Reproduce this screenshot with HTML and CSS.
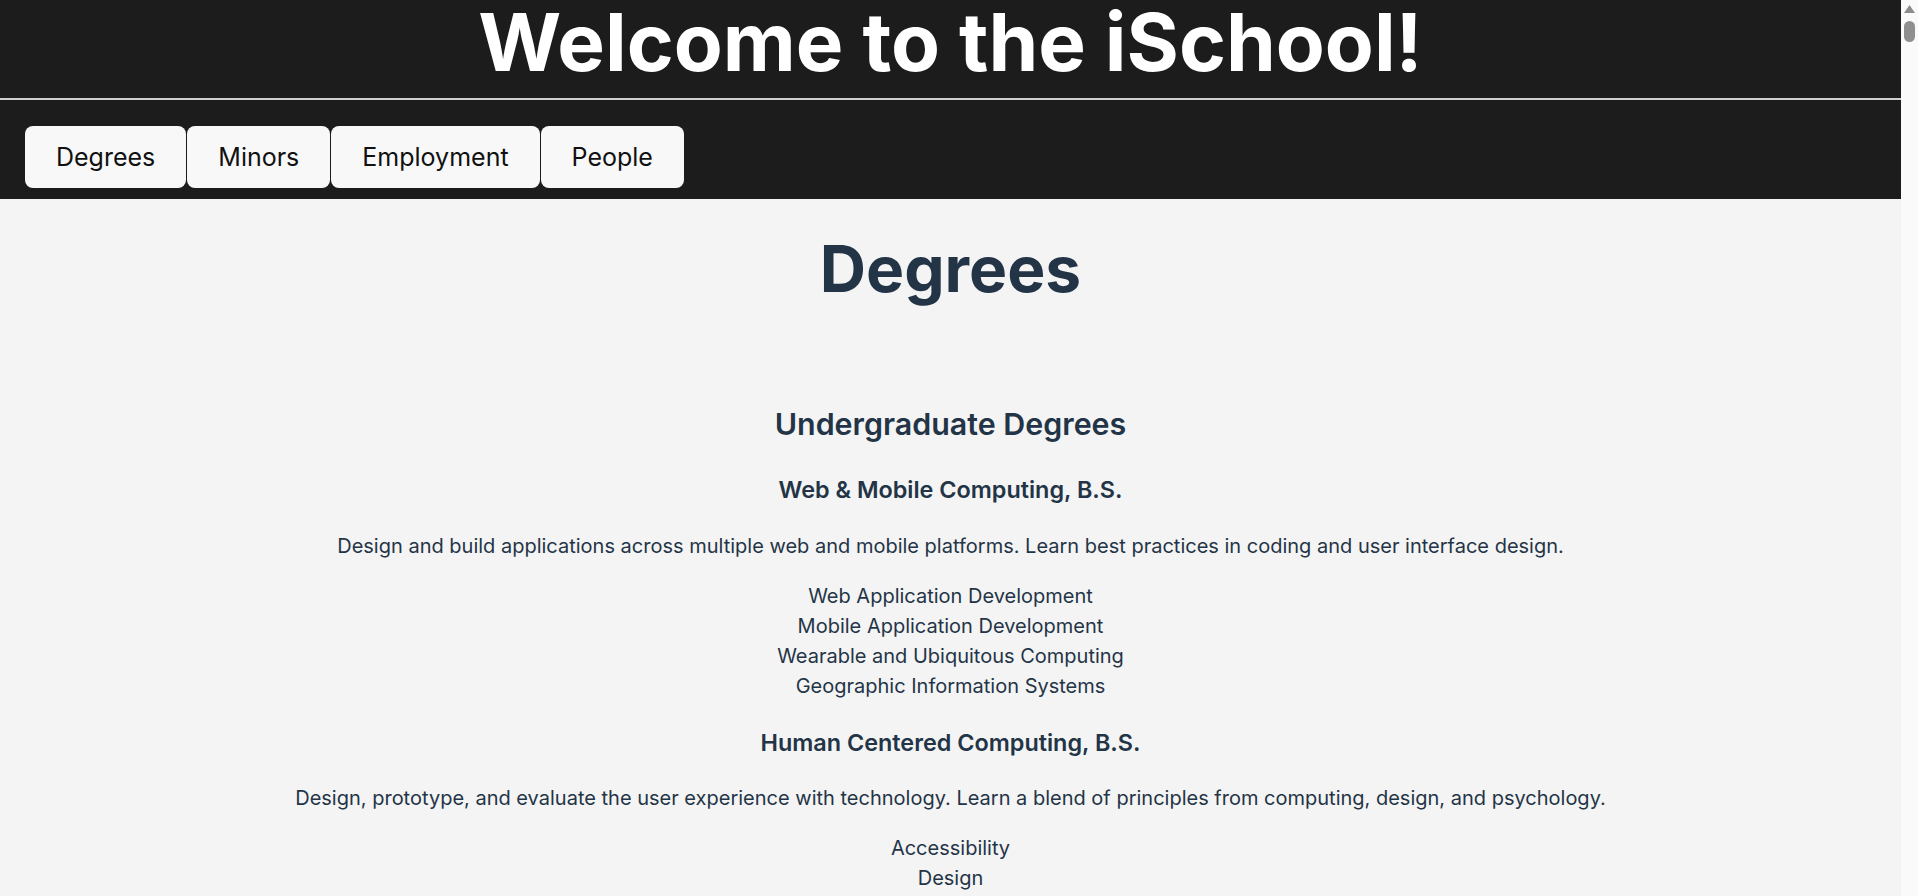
FILE: index.html
```html
<!DOCTYPE html>
<html lang="en">
<head>
<meta charset="utf-8">
<title>Welcome to the iSchool!</title>
<link rel="stylesheet" href="styles.css">
</head>
<body>
<header class="site-header">
  <h1 class="site-title">Welcome to the iSchool!</h1>
</header>
<nav class="tabs">
  <button class="tab">Degrees</button>
  <button class="tab">Minors</button>
  <button class="tab">Employment</button>
  <button class="tab">People</button>
</nav>
<main class="content">
  <section class="section">
    <h2 class="section-title">Degrees</h2>
    <div class="group">
      <h3 class="group-title">Undergraduate Degrees</h3>
      <article class="degree">
        <h4 class="degree-title">Web &amp; Mobile Computing, B.S.</h4>
        <p class="degree-desc">Design and build applications across multiple web and mobile platforms. Learn best practices in coding and user interface design.</p>
        <ul class="conc">
          <li>Web Application Development</li>
          <li>Mobile Application Development</li>
          <li>Wearable and Ubiquitous Computing</li>
          <li>Geographic Information Systems</li>
        </ul>
      </article>
      <article class="degree">
        <h4 class="degree-title">Human Centered Computing, B.S.</h4>
        <p class="degree-desc">Design, prototype, and evaluate the user experience with technology. Learn a blend of principles from computing, design, and psychology.</p>
        <ul class="conc">
          <li>Accessibility</li>
          <li>Design</li>
          <li>Development</li>
          <li>Digital Humanities</li>
          <li>Game Design</li>
          <li>Psychology</li>
        </ul>
      </article>
      <article class="degree">
        <h4 class="degree-title">Computing and Information Technologies, B.S.</h4>
        <p class="degree-desc">Build the technical foundation to support the information needs of organizations. Learn networking, systems administration, databases, and security.</p>
        <ul class="conc">
          <li>Database</li>
          <li>Networking and Communications</li>
          <li>System Administration</li>
          <li>Information Security</li>
          <li>Web Development</li>
        </ul>
      </article>
    </div>
    <div class="group">
      <h3 class="group-title">Graduate Degrees</h3>
      <article class="degree">
        <h4 class="degree-title">Human Computer Interaction, M.S.</h4>
        <p class="degree-desc">Research and design human-centered technology. Study how people interact with computing systems and build usable, accessible interfaces.</p>
        <ul class="conc">
          <li>Accessibility</li>
          <li>Interaction Design</li>
          <li>Usability Evaluation</li>
          <li>Prototyping</li>
        </ul>
      </article>
      <article class="degree">
        <h4 class="degree-title">Information Sciences &amp; Technologies, M.S.</h4>
        <p class="degree-desc">Explore how information is stored, managed, and delivered. Prepare for leadership roles in technology-driven organizations.</p>
        <ul class="conc">
          <li>Database Management</li>
          <li>Web Development</li>
          <li>Project Management</li>
          <li>Data Analytics</li>
        </ul>
      </article>
      <article class="degree">
        <h4 class="degree-title">Network &amp; System Administration, M.S.</h4>
        <p class="degree-desc">Design, deploy, and manage enterprise networks and systems. Gain hands-on experience with cloud, virtualization, and security.</p>
        <ul class="conc">
          <li>Cloud Computing</li>
          <li>Networking</li>
          <li>Security</li>
          <li>Virtualization</li>
        </ul>
      </article>
      <article class="degree">
        <h4 class="degree-title">Advanced Certificates</h4>
        <ul class="conc">
          <li>Web Development</li>
          <li>Networking Planning and Design</li>
        </ul>
      </article>
    </div>
  </section>
  <section class="section">
    <h2 class="section-title">Minors</h2>
    <div class="group">
      <article class="degree">
        <h4 class="degree-title">Database Design and Development</h4>
        <p class="degree-desc">Learn to design, build, and query relational and non-relational databases for modern applications.</p>
      </article>
      <article class="degree">
        <h4 class="degree-title">Geographic Information Systems and Technology</h4>
        <p class="degree-desc">Collect, analyze, and visualize geospatial data using current mapping technologies.</p>
      </article>
      <article class="degree">
        <h4 class="degree-title">Mobile Development</h4>
        <p class="degree-desc">Build native and cross-platform applications for phones, tablets, and wearable devices.</p>
      </article>
      <article class="degree">
        <h4 class="degree-title">Networking and Systems Administration</h4>
        <p class="degree-desc">Configure and maintain networks, servers, and the services that run on them.</p>
      </article>
      <article class="degree">
        <h4 class="degree-title">Web Design and Development</h4>
        <p class="degree-desc">Create accessible, responsive websites with modern front-end and back-end tools.</p>
      </article>
    </div>
  </section>
  <section class="section">
    <h2 class="section-title">Employment</h2>
    <div class="group">
      <h3 class="group-title">Co-op and Employment</h3>
      <p class="degree-desc">Our students gain real-world experience through cooperative education with employers across the country.</p>
      <ul class="conc">
        <li>Average starting salary: $72,000</li>
        <li>Co-op placement rate: 96%</li>
        <li>Employers: 1,200+</li>
      </ul>
    </div>
  </section>
  <section class="section">
    <h2 class="section-title">People</h2>
    <div class="group">
      <h3 class="group-title">Faculty and Staff</h3>
      <ul class="conc">
        <li>Faculty Directory</li>
        <li>Staff Directory</li>
        <li>Office Hours</li>
      </ul>
    </div>
  </section>
</main>
<div class="scrollbar" aria-hidden="true">
  <svg class="scroll-arrow" width="17" height="17" viewBox="0 0 17 17"><path d="M3 13 L8.5 5 L14 13 Z" fill="#8c8c8c"/></svg>
  <div class="scroll-thumb"></div>
</div>
</body>
</html>
```
FILE: styles.css
```css
* {
  box-sizing: border-box;
}

html, body {
  margin: 0;
  padding: 0;
}

html {
  background: #f4f4f4;
}

body {
  font-family: Inter, "Noto Sans", sans-serif;
  background: #f4f4f4;
  color: #243447;
  margin-right: 17px;
}

.site-header {
  background: #1c1c1c;
  height: 100px;
  border-bottom: 2px solid #cfcfcf;
  padding-top: 2px;
}

.site-title {
  margin: 0;
  color: #ffffff;
  font-size: 80px;
  line-height: 80px;
  font-weight: 700;
  text-align: center;
}

.tabs {
  background: #1c1c1c;
  height: 99px;
  display: flex;
  align-items: flex-start;
  gap: 1px;
  padding: 26px 25px 0;
}

.tab {
  font-family: Inter, "Noto Sans", sans-serif;
  font-size: 25px;
  font-weight: 400;
  color: #111111;
  background: #f8f8f8;
  border: none;
  border-radius: 8px;
  height: 62px;
  padding: 0 31px;
  cursor: pointer;
}

.content {
  padding: 31px 0 60px;
  text-align: center;
}

.section-title {
  margin: 0 0 99px;
  font-size: 64px;
  font-weight: 700;
  line-height: normal;
  color: #233447;
}

.group {
  margin-bottom: 60px;
}

.group-title {
  margin: 0 0 33px;
  font-size: 30.4px;
  font-weight: 600;
  line-height: normal;
  color: #233447;
}

.degree {
  margin-bottom: 27px;
}

.degree-title {
  margin: 0 0 26.5px;
  font-size: 23.4px;
  font-weight: 600;
  line-height: normal;
  color: #233447;
}

.degree-desc {
  margin: 0 0 20px;
  font-size: 20px;
  line-height: 30px;
}

.conc {
  list-style: none;
  margin: 0;
  padding: 0;
  font-size: 20px;
  line-height: 30px;
}

.scrollbar {
  position: fixed;
  top: 0;
  right: 0;
  width: 17px;
  height: 100vh;
  background: #fafafa;
}

.scroll-arrow {
  display: block;
}

.scroll-thumb {
  width: 11px;
  height: 21px;
  margin: 4px 0 0 3px;
  background: #8f8f8f;
  border-radius: 6px;
}
```
